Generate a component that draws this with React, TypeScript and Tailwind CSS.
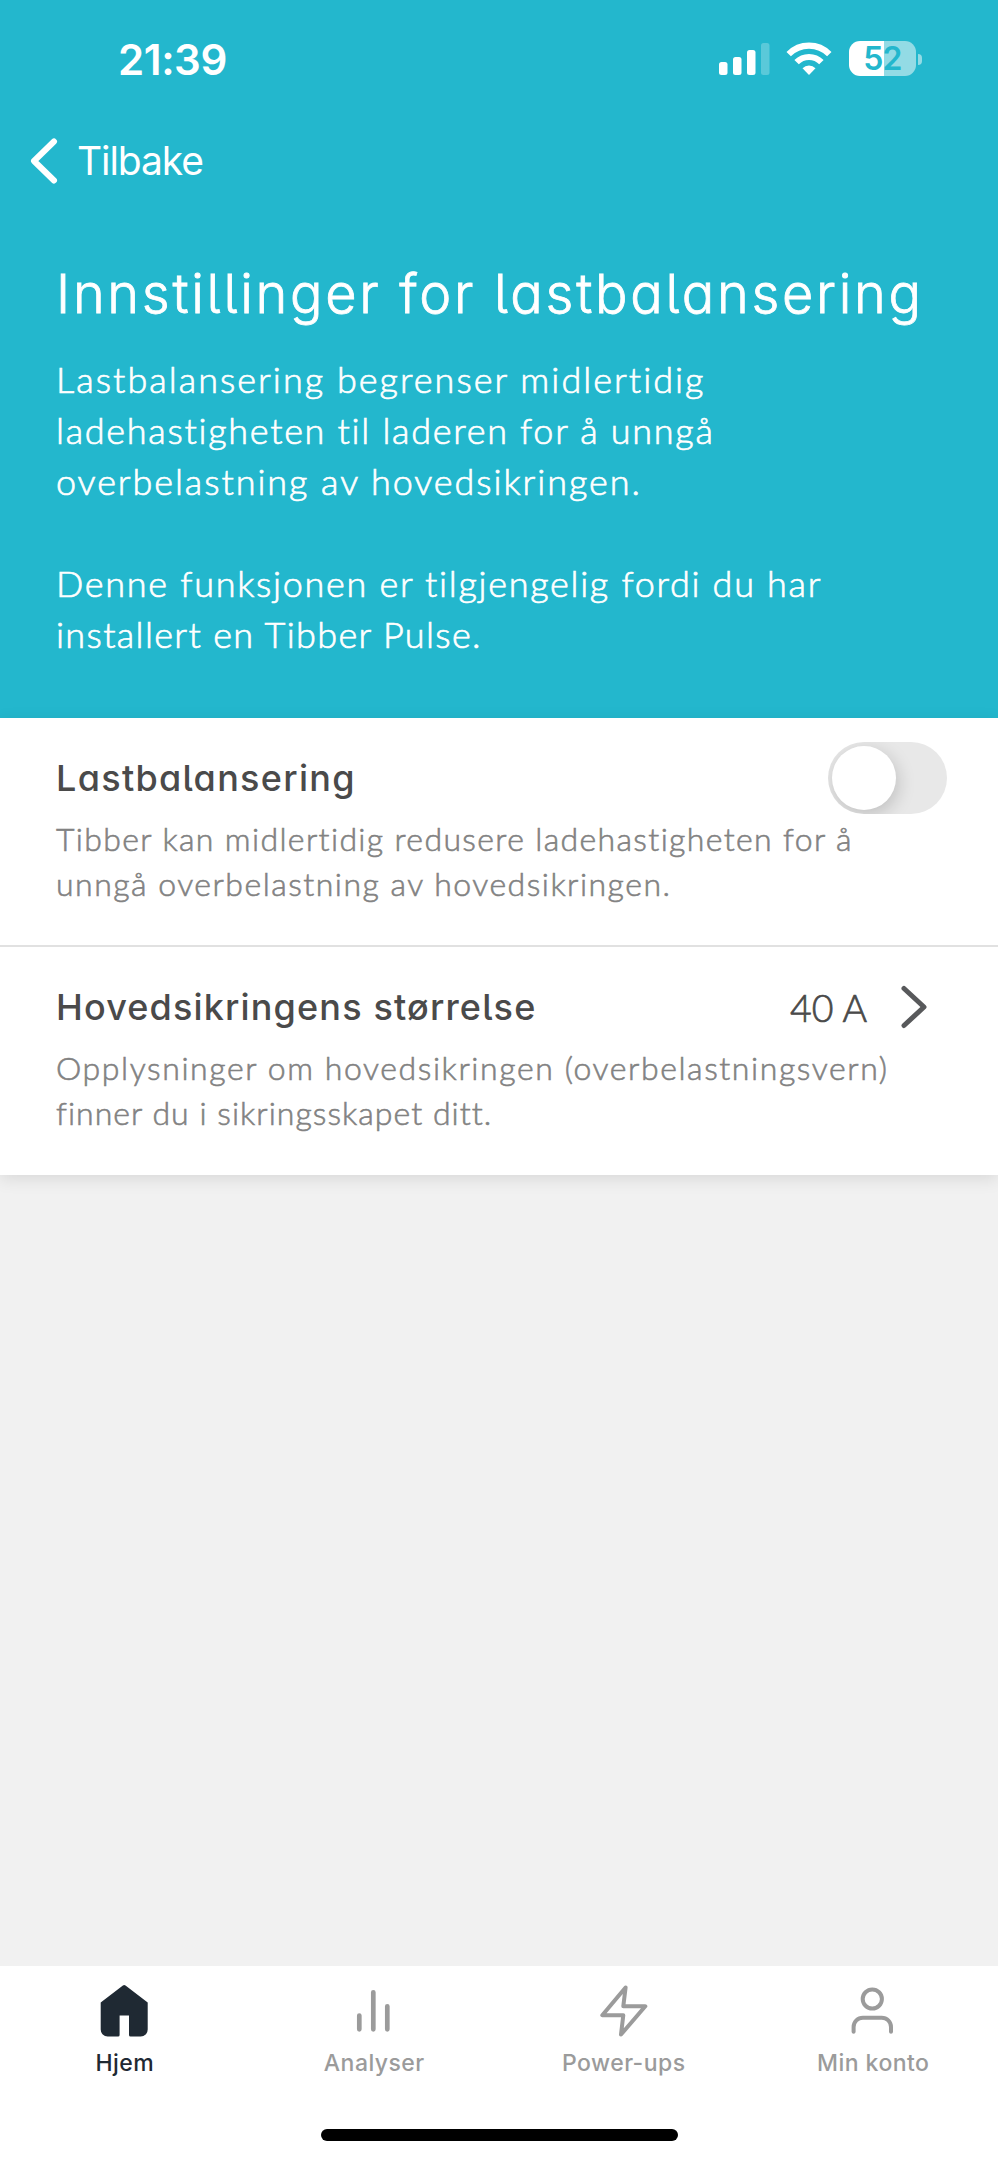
type TabName = 'home' | 'chart' | 'bolt' | 'user';

interface Tab {
  name: TabName;
  label: string;
  color: string;
}

const tabs: Tab[] = [
  { name: 'home', label: 'Hjem', color: 'text-[#1f2933]' },
  { name: 'chart', label: 'Analyser', color: 'text-[#9b9b9b]' },
  { name: 'bolt', label: 'Power-ups', color: 'text-[#9b9b9b]' },
  { name: 'user', label: 'Min konto', color: 'text-[#9b9b9b]' },
];

function TabIcon({ name }: { name: TabName }) {
  return (
    <svg width="56" height="56" viewBox="0.7 0 56 56" fill="none" stroke="currentColor" strokeWidth="4" strokeLinecap="round" strokeLinejoin="round">
      {name === 'home' && (
        <path
          d="M26.6 2.5a2 2 0 0 1 2.6 0L51.4 19.5V46.5a7 7 0 0 1-7 7H34.2a1.5 1.5 0 0 1-1.5-1.5V32.5h-9.4V52a1.5 1.5 0 0 1-1.5 1.5H11.4a7 7 0 0 1-7-7V19.5Z"
          fill="currentColor"
          stroke="none"
        />
      )}
      {name === 'chart' && <path d="M14 32.5V46.3M28 9.3V46.3M42 23.3V46.3" strokeWidth="4.7" />}
      {name === 'bolt' && <path d="M30.3 4.5 7 32.3H28L25.7 51.5 50 23.3H28Z" />}
      {name === 'user' && (
        <>
          <circle cx="28" cy="16" r="9.6" />
          <path d="M9.3 48.7V44a9.3 9.3 0 0 1 9.3-9.3H37.4a9.3 9.3 0 0 1 9.3 9.3v4.7" />
        </>
      )}
    </svg>
  );
}

function StatusBar() {
  return (
    <div className="flex h-[118px] items-center justify-between pl-[118px] pr-[76px]">
      <span className="pt-[2px] font-[Inter] text-[42px] font-semibold leading-none tracking-[-0.4px]">21:39</span>
      <div className="flex items-center">
        <svg width="52" height="34" viewBox="0 0 52 34" fill="currentColor">
          <rect x="1" y="20" width="8.5" height="13" rx="2.5" />
          <rect x="15" y="15" width="8.5" height="18" rx="2.5" />
          <rect x="29" y="8" width="8.5" height="25" rx="2.5" />
          <rect x="43" y="1" width="8.5" height="32" rx="2.5" opacity="0.25" />
        </svg>
        <svg className="ml-4" width="46" height="34" viewBox="0 0 46 34" fill="none" stroke="currentColor" strokeWidth="6.2">
          <path d="M2.7 12.1a28.5 28.5 0 0 1 40.6 0" />
          <path d="M10.6 20.2a17.4 17.4 0 0 1 24.8 0" />
          <path d="M23 33 16.5 26.3a9 9 0 0 1 13 0Z" fill="currentColor" stroke="none" />
        </svg>
        <div className="-mt-px ml-[17px] flex h-[35px] w-[67px] items-center justify-center rounded-[11px] bg-[linear-gradient(90deg,#fff_52%,#93dbe5_52%)] font-[Inter] text-[32px] font-semibold leading-none tracking-[-0.8px] text-[#23b7cd]">
          52
        </div>
        <div className="ml-[2px] h-[11px] w-[4px] rounded-r-full bg-[#93dbe5]" />
      </div>
    </div>
  );
}

export default function App() {
  return (
    <div className="flex h-[2160px] w-[998px] flex-col bg-[#f1f1f1] font-[Lato,sans-serif] text-[#4a4a4a]">
      <header className="h-[718px] shrink-0 bg-[#23b7cd] text-white">
        <StatusBar />
        <div className="flex h-[86px] items-center pl-[29px]">
          <svg width="30" height="46" viewBox="0 0 30 46" fill="none" stroke="currentColor" strokeWidth="6" strokeLinecap="round" strokeLinejoin="round">
            <path d="M25 3.5 5 23 25 42.5" />
          </svg>
          <span className="ml-[18px] pb-[2px] font-[Inter] text-[39px] leading-none tracking-[-1.1px]">Tilbake</span>
        </div>
        <h1 className="mt-[56px] whitespace-nowrap pl-[56px] font-[Inter] text-[54px] font-light leading-[68px] tracking-[2.72px] [font-feature-settings:'cv11','cv05'] [-webkit-text-stroke:0.8px_currentColor]">
          Innstillinger for lastbalansering
        </h1>
        <div className="mt-[26px] whitespace-nowrap pl-[56px] text-[36px] font-light leading-[51px] [-webkit-text-stroke:0.7px_currentColor]">
          <p className="tracking-[2.03px]">Lastbalansering begrenser midlertidig</p>
          <p className="tracking-[1.7px]">ladehastigheten til laderen for å unngå</p>
          <p className="tracking-[1.93px]">overbelastning av hovedsikringen.</p>
          <p className="mt-[51px] tracking-[1.7px]">Denne funksjonen er tilgjengelig fordi du har</p>
          <p className="tracking-[1.35px]">installert en Tibber Pulse.</p>
        </div>
      </header>

      <main className="h-[457px] shrink-0 bg-white shadow-[0_4px_16px_rgba(0,0,0,0.1)]">
        <section className="h-[229px] border-b-2 border-[#e1e1e1] pl-[56px] pr-[51px] pt-6">
          <div className="flex h-[72px] items-center justify-between">
            <h2 className="font-[Inter] text-[36px] font-medium leading-[44px] tracking-[1.3px] [font-feature-settings:'cv11','cv05']">Lastbalansering</h2>
            <button role="switch" aria-checked="false" className="h-[72px] w-[119px] overflow-hidden rounded-full bg-[#e8e8e8] p-[4px]">
              <span className="block size-[64px] rounded-full bg-white shadow-[2px_5px_18px_rgba(0,0,0,0.18)]" />
            </button>
          </div>
          <div className="mt-[3px] whitespace-nowrap text-[32px] font-light leading-[44.5px] text-[#828282] [-webkit-text-stroke:0.6px_currentColor]">
            <p className="tracking-[1.36px]">Tibber kan midlertidig redusere ladehastigheten for å</p>
            <p className="tracking-[1.49px]">unngå overbelastning av hovedsikringen.</p>
          </div>
        </section>
        <section className="pl-[56px] pr-[68px] pt-6">
          <div className="flex h-[72px] items-center">
            <h2 className="font-[Inter] text-[36px] font-medium leading-[44px] tracking-[1.15px] [font-feature-settings:'cv11','cv05']">Hovedsikringens størrelse</h2>
            <span className="ml-auto pt-[2px] text-[37.5px] font-light leading-[44px] [-webkit-text-stroke:0.7px_currentColor]">40 A</span>
            <svg className="ml-[31px]" width="32" height="46" viewBox="0 0 32 46" fill="none" stroke="#58595b" strokeWidth="5" strokeLinecap="round" strokeLinejoin="round">
              <path d="M6 4.5 26 23 6 41.5" />
            </svg>
          </div>
          <div className="mt-[3px] whitespace-nowrap text-[32px] font-light leading-[44.5px] text-[#828282] [-webkit-text-stroke:0.6px_currentColor]">
            <p className="tracking-[1.58px]">Opplysninger om hovedsikringen (overbelastningsvern)</p>
            <p className="tracking-[1.03px]">finner du i sikringsskapet ditt.</p>
          </div>
        </section>
      </main>

      <nav className="mt-auto h-[194px] shrink-0 bg-white">
        <div className="grid h-[170px] grid-cols-4">
          {tabs.map((tab) => (
            <button key={tab.name} className={`flex flex-col items-center pt-[17px] ${tab.color}`}>
              <TabIcon name={tab.name} />
              <span className="mt-[10px] font-[Inter] text-[23px] font-medium leading-7 tracking-[0.45px]">{tab.label}</span>
            </button>
          ))}
        </div>
        <div className="mx-auto -mt-[7px] h-[12px] w-[357px] rounded-full bg-black" />
      </nav>
    </div>
  );
}
